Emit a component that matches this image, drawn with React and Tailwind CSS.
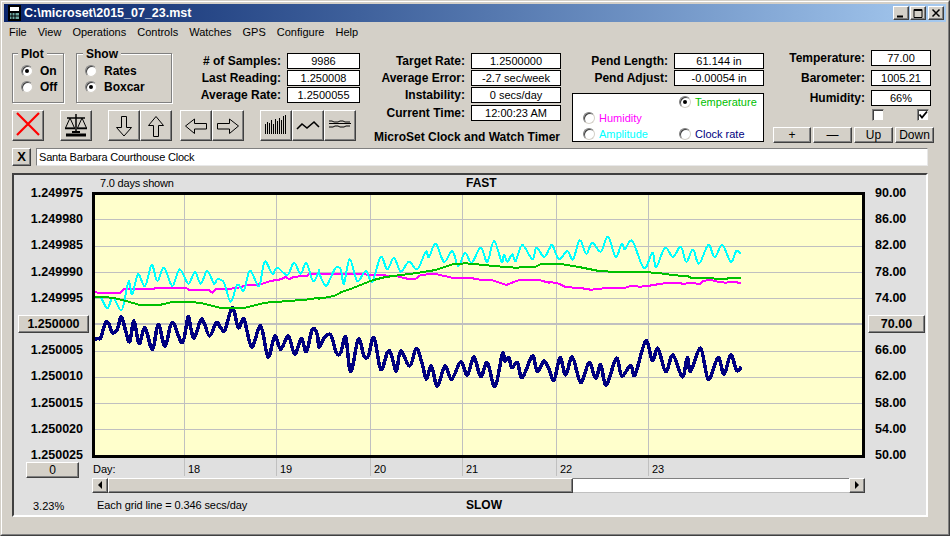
import React from "react";

const raised = "bg-[#d4d0c8] border border-t-white border-l-white border-r-[#404040] border-b-[#404040] shadow-[inset_-1px_-1px_0_#808080]";

// traces read off the plot in three overlapping windows: [x offset, points]
const toCoords = (chunks) => chunks.flatMap(([ox, pts]) => pts.map(([x, y]) => [ox + x / 3, 230 + y / 3]));

// catmull-rom through the points, the fast traces have rounded peaks
const toSmooth = (chunks) => {
    const p = toCoords(chunks);
    let d = `M${p[0][0].toFixed(1)} ${p[0][1].toFixed(1)}`;
    for (let i = 0; i < p.length - 1; i++) {
        const a = p[Math.max(i - 1, 0)];
        const b = p[i];
        const c = p[i + 1];
        const e = p[Math.min(i + 2, p.length - 1)];
        const c1 = [b[0] + (c[0] - a[0]) / 6, b[1] + (c[1] - a[1]) / 6];
        const c2 = [c[0] - (e[0] - b[0]) / 6, c[1] - (e[1] - b[1]) / 6];
        d += `C${c1[0].toFixed(1)} ${c1[1].toFixed(1)} ${c2[0].toFixed(1)} ${c2[1].toFixed(1)} ${c[0].toFixed(1)} ${c[1].toFixed(1)}`;
    }
    return d;
};

const toPoints = (chunks) => toCoords(chunks).map(([x, y]) => `${x.toFixed(1)},${y.toFixed(1)}`).join(" ");

const navy = toSmooth([
    [90, [[15, 325], [28, 322], [35, 320], [50, 275], [60, 280], [70, 305], [85, 295], [97, 257], [110, 300], [122, 332], [135, 270], [150, 338], [168, 290], [190, 355], [208, 280], [228, 345], [250, 275], [280, 335], [297, 258], [305, 290], [316, 320], [335, 267], [345, 275], [362, 315], [382, 275], [395, 290], [408, 297], [430, 230], [448, 290], [465, 265], [488, 348], [515, 285], [537, 378], [557, 315], [575, 355], [598, 315], [617, 370], [637, 322], [652, 362], [670, 295], [685, 310]]],
    [320, [[0, 348], [15, 322], [35, 312], [52, 365], [65, 365], [80, 318], [95, 422], [118, 325], [135, 375], [148, 375], [165, 320], [185, 415], [205, 365], [215, 365], [232, 420], [245, 360], [272, 405], [292, 352], [310, 400], [322, 445], [337, 405], [355, 465], [378, 405], [398, 445], [425, 392], [445, 432], [465, 378], [485, 437], [505, 395], [528, 467], [550, 368], [558, 390], [570, 380], [578, 410], [595, 395], [610, 440], [640, 375], [655, 422], [675, 390]]],
    [550, [[0, 415], [15, 448], [33, 380], [50, 432], [70, 378], [95, 455], [120, 395], [140, 442], [155, 402], [172, 462], [202, 382], [218, 435], [245, 403], [258, 432], [290, 330], [310, 388], [327, 352], [350, 422], [372, 372], [400, 438], [415, 380], [425, 420], [455, 352], [478, 445], [507, 380], [525, 430], [545, 372], [563, 418], [577, 408]]],
]);

const cyan = toSmooth([
    [90, [[12, 198], [35, 200], [55, 232], [72, 200], [97, 238], [110, 190], [120, 150], [130, 190], [147, 130], [168, 165], [188, 102], [205, 150], [225, 110], [250, 165], [272, 115], [298, 158], [318, 122], [335, 158], [355, 120], [375, 158], [385, 145], [405, 155], [425, 212], [445, 162], [465, 178], [483, 118], [510, 165], [527, 92], [550, 128], [565, 110], [595, 132], [615, 95], [635, 128], [652, 95], [672, 150], [690, 120]]],
    [320, [[0, 125], [20, 165], [35, 140], [50, 110], [65, 115], [75, 158], [92, 85], [115, 150], [140, 120], [160, 152], [185, 78], [205, 115], [225, 80], [245, 122], [270, 92], [295, 115], [320, 62], [330, 78], [350, 38], [375, 92], [400, 60], [418, 105], [438, 65], [458, 95], [485, 50], [505, 92], [525, 30], [548, 92], [555, 70], [565, 92], [580, 70], [590, 90], [610, 42], [640, 85], [652, 50], [675, 78]]],
    [550, [[0, 55], [10, 42], [30, 85], [55, 60], [72, 85], [92, 28], [112, 68], [130, 35], [155, 62], [177, 17], [200, 78], [218, 38], [228, 55], [250, 30], [285, 112], [310, 65], [322, 108], [348, 50], [372, 78], [395, 47], [412, 92], [432, 55], [450, 98], [478, 42], [497, 78], [520, 42], [545, 92], [562, 60], [575, 68]]],
]);

const magenta = toPoints([
    [90, [[12, 178], [25, 185], [95, 185], [105, 175], [290, 170], [300, 177], [360, 177], [370, 185], [380, 175], [440, 172], [478, 162], [515, 160], [545, 150], [575, 145], [590, 138], [600, 145], [615, 137], [655, 135], [660, 130], [690, 128]]],
    [320, [[0, 128], [130, 130], [230, 135], [265, 143], [290, 143], [305, 132], [345, 128], [400, 140], [460, 142], [490, 147], [520, 148], [562, 162], [600, 147], [660, 147], [690, 155]]],
    [550, [[0, 152], [30, 158], [50, 168], [100, 172], [125, 176], [165, 172], [230, 170], [245, 165], [275, 167], [310, 163], [335, 158], [365, 155], [405, 158], [430, 155], [452, 160], [462, 150], [485, 146], [505, 152], [530, 155], [550, 152], [575, 156]]],
]);

const green = toPoints([
    [90, [[12, 197], [70, 200], [100, 207], [150, 221], [215, 221], [250, 213], [300, 212], [340, 217], [395, 231], [465, 231], [530, 215], [600, 210], [660, 205], [690, 200]]],
    [320, [[0, 203], [45, 195], [70, 182], [100, 172], [160, 148], [200, 138], [300, 125], [350, 117], [400, 100], [440, 97], [550, 107], [590, 110], [650, 107], [665, 100], [690, 99]]],
    [550, [[0, 100], [30, 98], [90, 108], [150, 120], [185, 122], [300, 124], [345, 128], [375, 133], [415, 135], [425, 140], [480, 142], [530, 144], [545, 140], [575, 140]]],
]);

const leftAxis = ["1.249975", "1.249980", "1.249985", "1.249990", "1.249995", null, "1.250005", "1.250010", "1.250015", "1.250020", "1.250025"];
const rightAxis = ["90.00", "86.00", "82.00", "78.00", "74.00", null, "66.00", "62.00", "58.00", "54.00", "50.00"];
const hGrid = [218, 245, 271, 297, 350, 376, 402, 428];
const vGrid = [185.5, 277.5, 371.5, 463.5, 557.5, 649.5];

const Radio = ({ checked, label, className = "" }) => (
    <div className={`flex items-center h-4 ${className}`}>
        <span className="w-3 h-3 rounded-full bg-white border border-t-[#808080] border-l-[#808080] border-r-[#d4d0c8] border-b-[#d4d0c8] shadow-[inset_1px_1px_0_#404040] flex items-center justify-center shrink-0">
            {checked && <span className="w-1 h-1 rounded-full bg-black" />}
        </span>
        {label}
    </div>
);

const Field = ({ label, value, w }) => (
    <div className="flex items-center h-4">
        <span className="flex-1 text-right font-bold text-[12px] whitespace-nowrap">{label}</span>
        <span className={`${w} ml-[6px] h-4 bg-white border border-black flex items-center justify-center text-[11px]`}>{value}</span>
    </div>
);

const ToolButton = ({ className = "", children }) => (
    <div className={`w-8 h-[31px] ${raised} ${className}`}>
        <svg width="30" height="29" viewBox="1 1 30 29" fill="none" stroke="black">{children}</svg>
    </div>
);

const CaptionButton = ({ children, className = "" }) => (
    <div className={`w-4 h-[14px] ${raised} ${className}`}>
        <svg width="14" height="12" viewBox="0 0 14 12" fill="none" stroke="black">{children}</svg>
    </div>
);

const SmallButton = ({ className = "", children }) => (
    <div className={`flex items-center justify-center ${raised} ${className}`}>{children}</div>
);

const App = () => {
    return (
        <div className="w-[950px] h-[536px] overflow-hidden bg-[#d4d0c8] text-black font-['Liberation_Sans',Arial,sans-serif] text-[11px] leading-[14px] border border-r-[#404040] border-b-[#404040] border-t-[#d4d0c8] border-l-[#d4d0c8]">
            <div className="h-full border border-t-white border-l-white border-r-[#808080] border-b-[#808080] p-[2px]">
                {/* title bar */}
                <div className="h-[18px] flex items-center bg-gradient-to-r from-[#0a246a] to-[#a6caf0] pl-1 pr-[2px]">
                    <svg width="13" height="16" viewBox="0 0 13 16" className="shrink-0">
                        <rect width="13" height="16" fill="#000" />
                        <rect x="2" y="2" width="9" height="4" fill="#fff" />
                        <rect x="2" y="8" width="9" height="6" fill="#6fa8a0" />
                        <path d="M4 8v6M7 8v6M2 11h9" stroke="#000" />
                    </svg>
                    <span className="ml-[3px] font-bold text-[12.5px] text-white">C:\microset\2015_07_23.mst</span>
                    <div className="ml-auto flex">
                        <CaptionButton>
                            <path d="M3 9.5h6" strokeWidth="2" />
                        </CaptionButton>
                        <CaptionButton className="ml-[1px]">
                            <path d="M3 2.5h8v8h-8zM3 3.5h8" />
                        </CaptionButton>
                        <CaptionButton className="ml-[2px]">
                            <path d="M3.5 2.5l7 7M10.5 2.5l-7 7" strokeWidth="1.5" />
                        </CaptionButton>
                    </div>
                </div>

                {/* menu */}
                <div className="flex h-5 items-center pl-[5px] gap-[11px]">
                    {["File", "View", "Operations", "Controls", "Watches", "GPS", "Configure", "Help"].map((m) => (
                        <span key={m}>{m}</span>
                    ))}
                </div>

                {/* controls */}
                <div className="flex mt-2 pl-2">
                    <div className="w-[362px] pt-[3px]">
                        <div className="flex w-[348px] h-[50px]">
                            <div className="relative w-[52px] h-[50px] border border-[#808080] shadow-[inset_1px_1px_0_#fff,1px_1px_0_#fff] pl-2 pt-[9px]">
                                <span className="absolute -top-[7px] left-[5px] px-[3px] bg-[#d4d0c8] font-bold text-[12px]">Plot</span>
                                <Radio checked label={<span className="ml-[7px] font-bold text-[12px]">On</span>} />
                                <Radio label={<span className="ml-[7px] font-bold text-[12px]">Off</span>} />
                            </div>
                            <div className="relative w-[96px] h-[50px] ml-3 border border-[#808080] shadow-[inset_1px_1px_0_#fff,1px_1px_0_#fff] pl-2 pt-[9px]">
                                <span className="absolute -top-[7px] left-[6px] px-[3px] bg-[#d4d0c8] font-bold text-[12px]">Show</span>
                                <Radio label={<span className="ml-[7px] font-bold text-[12px]">Rates</span>} />
                                <Radio checked label={<span className="ml-[7px] font-bold text-[12px]">Boxcar</span>} />
                            </div>
                            <div className="flex-1 flex flex-col gap-[1px]">
                                <Field label="# of Samples:" value="9986" w="w-[73px]" />
                                <Field label="Last Reading:" value="1.250008" w="w-[73px]" />
                                <Field label="Average Rate:" value="1.2500055" w="w-[73px]" />
                            </div>
                        </div>

                        <div className="flex mt-[7px]">
                            <ToolButton>
                                <path d="M5 3l22 22M27 3L5 25" stroke="#ff0000" strokeWidth="2.2" />
                            </ToolButton>
                            <ToolButton className="ml-4">
                                <path d="M16 4v19M7 8h18" strokeWidth="1.5" />
                                <path d="M5.5 18l4.5-10 4.5 10zM17.5 18l4.5-10 4.5 10z" />
                                <path d="M5 18.5h10M17 18.5h10" strokeWidth="1.5" />
                                <path d="M6 25h20" strokeWidth="3" />
                                <path d="M12 22h8" strokeWidth="2" />
                            </ToolButton>
                            <ToolButton className="ml-4">
                                <path d="M13.5 6.5h5v11h5l-7.5 8.5l-7.5-8.5h5z" />
                            </ToolButton>
                            <ToolButton>
                                <path d="M13.5 26.5h5v-11h5l-7.5-9l-7.5 9h5z" />
                            </ToolButton>
                            <ToolButton className="ml-2">
                                <path d="M5.5 16l9-7v4.5h12v5.5h-12v4.5z" />
                            </ToolButton>
                            <ToolButton>
                                <path d="M26.5 16l-9-7v4.5h-12v5.5h12v4.5z" />
                            </ToolButton>
                            <ToolButton className="ml-4">
                                <path d="M5.5 24v-10M7.5 24v-12M9.5 24v-11M11.5 24v-14M13.5 24v-10M15.5 24v-15M17.5 24v-13M19.5 24v-16M21.5 24v-14M23.5 24v-18M25.5 24v-19" />
                            </ToolButton>
                            <ToolButton>
                                <path d="M5 19l5-5 5 4 7-6 5 5" strokeWidth="1.6" />
                            </ToolButton>
                            <ToolButton>
                                <path d="M5 11h3l2 1h4l2-1h3l2 1h5M5 13.5h22" />
                                <path d="M5 17h4l2-1h3l2 1h4l2-1h4" />
                            </ToolButton>
                        </div>
                    </div>

                    <div className="w-[187px] pt-[3px]">
                        <div className="flex flex-col gap-[1px]">
                            <Field label="Target Rate:" value="1.2500000" w="w-[90px]" />
                            <Field label="Average Error:" value="-2.7 sec/week" w="w-[90px]" />
                            <Field label="Instability:" value="0 secs/day" w="w-[90px]" />
                        </div>
                        <div className="mt-[2px]">
                            <Field label="Current Time:" value="12:00:23 AM" w="w-[90px]" />
                        </div>
                        <div className="mt-[9px] font-bold text-[12px] whitespace-nowrap">MicroSet Clock and Watch Timer</div>
                    </div>

                    <div className="w-[192px] ml-[11px] pt-[3px]">
                        <div className="flex flex-col gap-[1px]">
                            <Field label="Pend Length:" value="61.144 in" w="w-[90px]" />
                            <Field label="Pend Adjust:" value="-0.00054 in" w="w-[90px]" />
                        </div>
                        <div className="mt-[7px] h-[49px] bg-white border border-black grid grid-cols-[96px_1fr] pl-[10px] content-center">
                            <span />
                            <Radio checked label={<span className="ml-1 text-[#00c000]">Temperature</span>} />
                            <Radio label={<span className="ml-1 text-[#ff00ff]">Humidity</span>} />
                            <span />
                            <Radio label={<span className="ml-1 text-[#00ffff]">Amplitude</span>} />
                            <Radio label={<span className="ml-1 text-[#000080]">Clock rate</span>} />
                        </div>
                    </div>

                    <div className="w-[161px] ml-[9px]">
                        <div className="pr-[3px] flex flex-col gap-1">
                            <Field label="Temperature:" value="77.00" w="w-[60px]" />
                            <Field label="Barometer:" value="1005.21" w="w-[60px]" />
                            <Field label="Humidity:" value="66%" w="w-[60px]" />
                        </div>
                        <div className="flex mt-[3px] h-[13px] pl-[99px]">
                            <span className="w-3 h-3 bg-white border border-t-[#808080] border-l-[#808080] border-r-[#d4d0c8] border-b-[#d4d0c8] shadow-[inset_1px_1px_0_#404040]" />
                            <span className="w-3 h-3 ml-[33px] bg-white border border-t-[#808080] border-l-[#808080] border-r-[#d4d0c8] border-b-[#d4d0c8] shadow-[inset_1px_1px_0_#404040] flex items-center justify-center">
                                <svg width="10" height="10" viewBox="0 0 10 10" fill="none" stroke="black" strokeWidth="1.8">
                                    <path d="M1.5 4.5l2.5 3 5-6" />
                                </svg>
                            </span>
                        </div>
                        <div className="flex mt-[5px] gap-[2px] h-4 text-[12px]">
                            <SmallButton className="w-[38px]">+</SmallButton>
                            <SmallButton className="w-[39px]">—</SmallButton>
                            <SmallButton className="w-[39px]">Up</SmallButton>
                            <SmallButton className="w-[39px]">Down</SmallButton>
                        </div>
                    </div>
                </div>

                {/* clock name */}
                <div className="flex items-center mt-1 ml-[8px]">
                    <SmallButton className="w-[19px] h-[18px] font-bold text-[13px]">X</SmallButton>
                    <div className="ml-[5px] w-[892px] h-[18px] bg-white border border-t-[#808080] border-l-[#808080] border-r-[#e8e8e8] border-b-[#e8e8e8] pl-[2px] flex items-center tracking-[-0.2px]">
                        Santa Barbara Courthouse Clock
                    </div>
                </div>

                {/* plot panel */}
                <div className="flex mt-[7px] ml-[8px] w-[916px] h-[344px] bg-[#e0e0e0] border-2 border-t-[#404040] border-l-[#404040] border-r-white border-b-white">
                    <div className="w-[78px] pt-[11px] flex flex-col">
                        <div className="flex flex-col gap-[12.2px] font-bold text-[12.5px] text-right pr-[9px]">
                            {leftAxis.map((v, i) =>
                                v ? (
                                    <span key={i} className="h-[14px]">{v}</span>
                                ) : (
                                    <SmallButton key={i} className="-my-[2px] ml-1 w-[71px] h-[18px]">1.250000</SmallButton>
                                )
                            )}
                        </div>
                        <SmallButton className="ml-3 w-[53px] h-4 text-[12px]">0</SmallButton>
                        <span className="mt-[21px] pl-[19px]">3.23%</span>
                    </div>

                    <div className="w-[773px] flex flex-col">
                        <div className="h-[17px] flex items-center">
                            <span className="w-[374px] pl-2 tracking-[-0.2px]">7.0 days shown</span>
                            <span className="font-bold text-[12px]">FAST</span>
                        </div>
                        <div className="h-[266px] border-[3px] border-black bg-[#ffffcc]">
                            <svg width="767" height="260" viewBox="96 194 767 260" shapeRendering="crispEdges" fill="none" className="block">
                                {hGrid.map((y) => (
                                    <line key={y} x1="96" x2="863" y1={y + 0.5} y2={y + 0.5} stroke="#c0c0c0" />
                                ))}
                                <line x1="96" x2="863" y1="323" y2="323" stroke="#c0c0c0" strokeWidth="2" />
                                {vGrid.map((x) => (
                                    <line key={x} x1={x} x2={x} y1="194" y2="454" stroke="#c0c0c0" />
                                ))}
                                <path d={navy} stroke="#000080" strokeWidth="3.5" strokeLinejoin="round" />
                                <polyline points={magenta} stroke="#ff00ff" strokeWidth="2" />
                                <path d={cyan} stroke="#00ffff" strokeWidth="2" />
                                <polyline points={green} stroke="#00c000" strokeWidth="2" />
                            </svg>
                        </div>
                        <div className="h-5 grid grid-cols-[92px_92px_94px_92px_94px_92px_1fr]">
                            {["Day:", "18", "19", "20", "21", "22", "23"].map((d, i) => (
                                <div key={d} className={`h-[18px] pt-[4px] ${i === 0 ? "pl-[1px]" : "border-l border-[#c0c0c0] pl-[3px]"}`}>{d}</div>
                            ))}
                        </div>
                        <div className="h-4 flex bg-white">
                            <div className={`w-4 flex items-center justify-center ${raised}`}>
                                <span className="w-0 h-0 border-y-[4px] border-y-transparent border-r-[4px] border-r-black" />
                            </div>
                            <div className={`w-[465px] ${raised}`} />
                            <div className="flex-1 border-t border-[#808080] border-b border-b-[#c0c0c0]" />
                            <div className={`w-4 flex items-center justify-center ${raised}`}>
                                <span className="w-0 h-0 border-y-[4px] border-y-transparent border-l-[4px] border-l-black" />
                            </div>
                        </div>
                        <div className="flex items-center h-[22px] pt-[1px]">
                            <span className="w-[374px] pl-[5px] tracking-[-0.1px]">Each grid line = 0.346 secs/day</span>
                            <span className="font-bold text-[12px]">SLOW</span>
                        </div>
                    </div>

                    <div className="flex-1 pt-[11px] flex flex-col gap-[12.2px] font-bold text-[12.5px] pl-[10px]">
                        {rightAxis.map((v, i) =>
                            v ? (
                                <span key={i} className="h-[14px]">{v}</span>
                            ) : (
                                <SmallButton key={i} className="-my-[2px] -ml-[7px] w-[57px] h-[18px]">70.00</SmallButton>
                            )
                        )}
                    </div>
                </div>
            </div>
        </div>
    );
};

export default App;
